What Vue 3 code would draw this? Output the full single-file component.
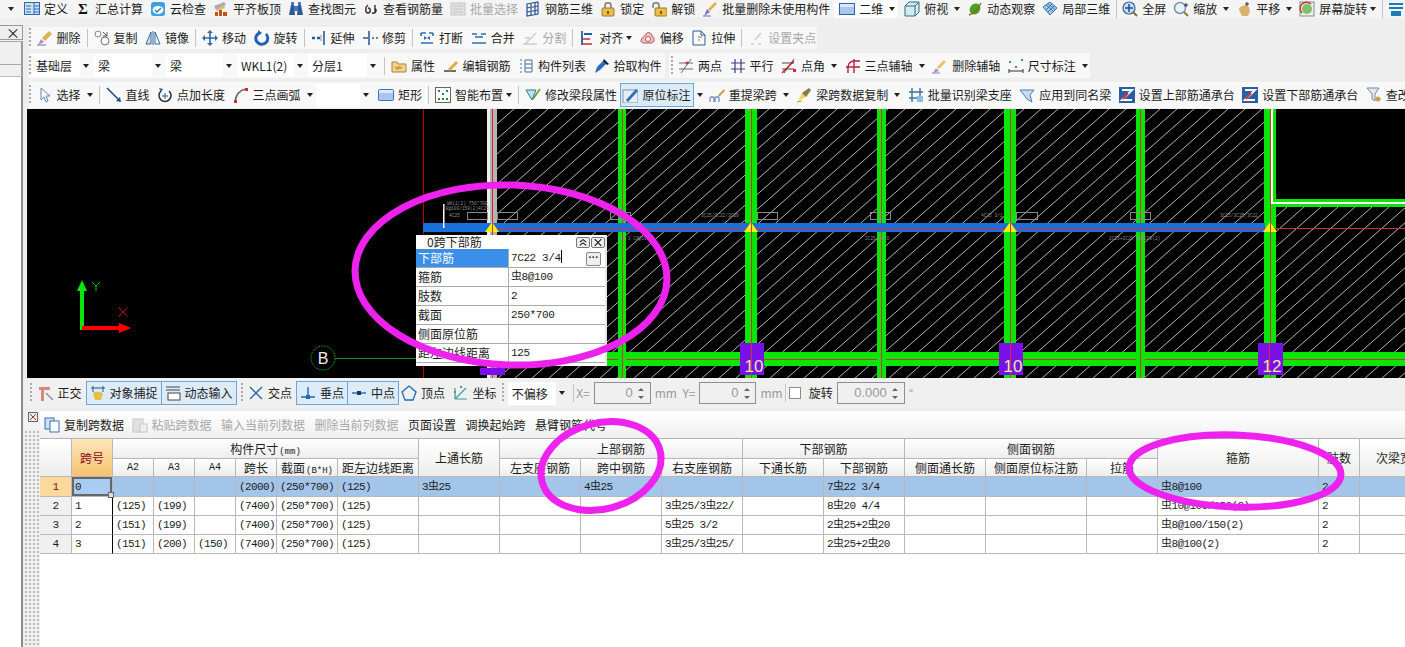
<script setup>
const S = (d, c = '#333', w = 1) => `<path d="${d}" fill="none" stroke="${c}" stroke-width="${w}"/>`
const F = (d, c) => `<path d="${d}" fill="${c}"/>`
const icons = {
  def: `<rect x=".5" y="1.5" width="15" height="12" fill="#cfe0f5" stroke="#2a6ab0"/>` + S('M2 5h5M2 8h5M2 11h5M10 2v11M10 5h5M10 8h5M10 11h5', '#2a6ab0'),
  sum: `<text x="8" y="13" font-size="15" font-weight="bold" text-anchor="middle" font-family="Liberation Serif" fill="#111">Σ</text>`,
  cloud: `<rect x="1" y="1" width="14" height="14" rx="3" fill="#3d9fe0"/><ellipse cx="8" cy="9" rx="5.5" ry="4" fill="#fff"/>` + S('M5 9l2 2 4-4', '#2a80c0', 1.5),
  level: F('M2 11h3v4H2zM6 9h3v6H6zM10 11h4v4h-4z', '#c8501e') + F('M1 5l10-4 2 3-10 5z', '#aab') + F('M3 9l8-4 1 2-8 3z', '#e8b830'),
  binoc: F('M1 14l2-10h3l1 10zM9 14l1-10h3l2 10z', '#2c5a96') + F('M6 5h4v5H6zM3 1h3v3H3zM10 1h3v3h-3z', '#4a7ab5'),
  specs: S('M5 4c-3 2-3 8 0 8 3 0 3-5 0-5M9 12c4 1 5-3 3-5M12 4v8', '#333', 1.4),
  batch: `<rect x="1" y="2" width="14" height="12" fill="#ddd" stroke="#bbb"/>` + S('M3 5h10M3 8h10M3 11h10', '#bbb'),
  cage: S('M2 3l11-2v12L2 15zM6 2v12M10 2v12M2 7l11-2M2 11l11-2', '#24518c', 1.2),
  lock: S('M5 7V4c0-3 6-3 6 0v3', '#777', 1.5) + `<rect x="2" y="7" width="12" height="8" rx="1" fill="#e8be48" stroke="#a07a18"/>` + F('M7 10h2v3H7z', '#7a5a10'),
  unlock: S('M2 7V4c0-3 6-3 6 0v3', '#777', 1.5) + `<rect x="4" y="7" width="12" height="8" rx="1" fill="#e8be48" stroke="#a07a18"/>` + F('M9 10h2v3H9z', '#7a5a10'),
  brush: F('M2 15l3-7 3 3z', '#8a6fc0') + F('M6 8l7-7 2 2-7 7z', '#e0b050') + S('M1 15h8', '#5a8ad0', 1.2),
  plane: `<rect x=".5" y="2.5" width="15" height="11" fill="#a9c6ee" stroke="#2f62a8"/>` + F('M1 3h14v3H1z', '#dbe8fa'),
  cube: `<path d="M1 5l4-4h10v10l-4 4H1z" fill="#d5ebf2" stroke="#2d6a88"/>` + S('M1 5h10v10M11 5l4-4', '#2d6a88'),
  orbit: `<ellipse cx="8" cy="8" rx="5" ry="6" transform="rotate(40 8 8)" fill="#4aa02c"/>` + S('M2 14C6 13 11 8 14 2', '#8a6a20', 1.4),
  part3d: `<path d="M1 6l7-5 7 6-7 7z" fill="#a8c8ec" stroke="#3a70aa"/>` + S('M4 4l7 6M6 2.500l7 6M4 9l6-6M6 11l6-6', '#3a70aa'),
  full: `<circle cx="7" cy="7" r="6" fill="#c9dcf2" stroke="#3a5f95" stroke-width="1.2"/>` + S('M7 3v8M3 7h8', '#1d4ea0', 1.5) + S('M11 11l4 4', '#8a6a3a', 2),
  zoom: `<circle cx="7" cy="7" r="5.500" fill="#e8f0f8" stroke="#7d93ad" stroke-width="1.5"/>` + S('M11 11l4 4', '#9a7a3a', 2) + S('M13 2v4M11 4h4', '#333'),
  pan: F('M3 9c0-3 2-3 3-4l4-1 3 2 1 4-2 5H6z', '#d9b36c') + S('M11 1v4M9 3h4', '#333'),
  rot: `<rect x="1" y="1" width="14" height="14" fill="#f5f0c8" stroke="#6a90c0"/>` + `<circle cx="8" cy="8" r="5" fill="#7cc07a"/>` + S('M3 12A6 6 0 0 1 12 3', '#d83030', 1.5),
  note: S('M1 3h14M1 7h14', '#1b7ab8', 2) + F('M3 10h10v5H3z', '#1b7ab8'),
  del: F('M1 15l3-6 3 3z', '#a590d8') + F('M5 8l7-7 3 3-7 7z', '#e0b050') + S('M0 15h9', '#777'),
  copy: `<circle cx="4" cy="4" r="3" fill="none" stroke="#888"/><circle cx="11" cy="11" r="4" fill="none" stroke="#777"/>` + S('M9 2l4 4M13 2v4h-4', '#555'),
  mirror: F('M1 14l5-12v12z', '#cfe0f0') + S('M1 14l5-12v12zM15 14l-5-12v12zM8 1v14', '#34679c'),
  move: S('M8 1v14M1 8h14', '#35699e', 1.6) + F('M8 0l3 3H5zM8 16l3-3H5zM0 8l3-3v6zM16 8l-3-3v6z', '#35699e'),
  rotate: S('M12 4a6 6 0 1 1-7-1', '#2461b8', 3) + F('M4 0v6l4-3z', '#2461b8'),
  extend: S('M13 1v14', '#2a5c9a', 1.6) + S('M1 8h3M6 8h3', '#2a5c9a', 2.500) + S('M10 5v6', '#888'),
  trim: S('M7 1v14', '#2a5c9a', 1.6) + S('M1 8h5M10 8h2M14 8h2', '#2a5c9a', 1.6),
  brk: S('M2 3h5M10 3h4M2 13h12M2 3v3M14 3v3', '#2a70b8', 1.6) + F('M5 6l3 2-3 2zM11 6l-3 2 3 2z', '#2a70b8'),
  merge: S('M1 4h5M10 4h5M1 13h14M4 7h8', '#2a70b8', 1.6),
  split: S('M1 14h14M3 14L14 3M3 8h7', '#c4c4c4', 1.4),
  align: S('M3 1v14', '#1d5fae', 1.8) + S('M3 14h10M3 9h8', '#c03030', 1.6) + F('M5 3h8v2H5z', '#1d5fae'),
  offset: `<path d="M1 11c0-4 4-4 5-7 2-3 6-1 6 2 3 1 3 7-1 7H4c-2 0-3-1-3-2z" fill="#efc0c0" stroke="#b05858"/>` + `<circle cx="8" cy="9" r="2.500" fill="#fff" stroke="#b05858"/>`,
  stretch: S('M2 1h8l4 4v10H2zM10 1v4h4', '#2a5c92') + S('M7 7h4M7 10h2', '#777'),
  grip: S('M3 14h3M10 14h3M13 3L7 10', '#c4c4c4', 1.5),
  prop: `<path d="M1 4h5l1 2h8v8H1z" fill="#f3d68a" stroke="#a88438"/>` + F('M3 9l6-1 3 2-6 2z', '#c4a050'),
  edit: S('M1 13h12', '#333', 1.4) + F('M5 11l8-8 2 2-8 8z', '#e0a840'),
  list: S('M2 2h2M2 6h2M2 10h2M2 14h2M7 2h7v12H7zM7 6h7M7 10h7', '#4a6f95'),
  pick: F('M1 15l2-6 7-7 3 3-7 7z', '#2a6cc0') + F('M10 1l5 5-2 1-4-4z', '#123'),
  two: S('M3 15L13 1M1 5h14M1 11h14', '#666') + `<circle cx="9" cy="5" r="1.500" fill="#d03030"/>`,
  par: S('M1 5h14M1 11h14M5 1v14M11 1v14', '#40407a', 1.2),
  ang: S('M1 5h12M1 11h12M3 15L13 1', '#444') + S('M1 15L13 3', '#d02030', 1.5) + F('M12 11h3v3h-3z', '#d02060'),
  arc3: S('M3 15V9a6 6 0 0 1 6-6h6M1 9h14M9 1v14', '#b02040', 1.4),
  delaux: F('M1 15l3-5 3 3z', '#a590d8') + F('M5 9l7-7 2 2-7 7z', '#e8c060') + S('M0 15h8', '#888'),
  dim: S('M1 11v4M15 11v4M1 13h14', '#333') + F('M1 3h2v2H1zM7 8h2v2H7zM13 1h2v2h-2z', '#3a9a50'),
  sel: S('M4 1v12l3-3 2 5 2-1-2-5h4z', '#6a85b0'),
  line: S('M1 1l13 13', '#1d4e8c', 1.6) + F('M15 15l-5-1 4-4z', '#1d4e8c'),
  ptlen: S('M12 4a6 6 0 1 1-8 0', '#333', 1.5) + F('M2 1l4 1-2 3z', '#1d5fae') + S('M8 6v6M5 9h6', '#1d5fae'),
  arc: S('M2 15C3 7 7 3 13 2', '#666', 1.6) + F('M1 13h3v3H1zM12 1h3v3h-3z', '#c83030'),
  rect: `<rect x=".5" y="2.5" width="15" height="11" rx="1" fill="#a9c6ee" stroke="#3d72b4"/>` + F('M1 3h14v3H1z', '#dbe8fa'),
  smart: `<rect x=".5" y=".5" width="15" height="15" fill="#fff" stroke="#666"/>` + F('M3 3h2v2H3zM7 6h2v2H7zM11 3h2v2h-2zM3 11h2v2H3zM11 11h2v2h-2zM7 11h2v2H7z', '#2a8a40'),
  beamedit: `<path d="M1 3h10L7 13z" fill="#bfe0f0" stroke="#2a7a9a"/>` + S('M8 12L15 2', '#6a9a30', 1.6),
  insitu: `<rect x="1" y="3" width="15" height="13" fill="#e6eef8" stroke="#7a93b8"/>` + F('M4 13l10-11 2 2-10 11z', '#3a6ab0'),
  lift: S('M1 15v-3c0-3 4-3 4 0v3M6 15v-3c0-3 4-3 4 0v3', '#7a9ac0', 1.4) + F('M9 8l6-6 1 2-6 6z', '#c8a050'),
  dup: F('M2 14l4-8 4 4z', '#f0d860') + F('M6 6l7-5 2 2-5 7z', '#8a7a40') + S('M1 15l5-1', '#b89830'),
  batchid: S('M1 5h14M1 11h14M4 1v14M12 1v14', '#3a70a0', 1.4) + F('M9 9h6v6H9z', '#8ac0e0'),
  apply: `<path d="M1 3h14l-4 5 2 7-5-3-3-4z" fill="#c6daf2" stroke="#4a7fb8"/>`,
  z: `<rect x="0" y="0" width="16" height="16" fill="#2a5fa8"/>` + S('M3 3h10L3 13h10', '#fff', 2) + S('M4 12l5-6', '#d83030', 2),
  check: `<path d="M1 1h12l-4 6v7l-3-2V7z" fill="#e4e8ee" stroke="#7a8898"/>` + `<circle cx="12" cy="12" r="2.500" fill="#c8a050"/>`,
  ortho: F('M1 2h11v3H6v11H3V5H1z', '#d88878') + S('M8 8l7 7', '#8899aa', 1.5),
  snap: S('M3 1v6M13 1v6M1 3h14', '#33557a') + F('M3 9c0-3 9-3 10 0l-2 6H5z', '#e6bd4a'),
  input: S('M1 2h14M1 5h14', '#444') + `<rect x="3" y="8" width="12" height="7" fill="#fff" stroke="#444"/>`,
  cross: S('M2 2l12 12M14 2L2 14', '#2268b4', 1.4),
  perp: S('M1 12h14M8 2v10', '#2268b4', 1.4) + F('M6 10h4v4H6z', '#2268b4'),
  mid: S('M1 8h14', '#2268b4', 1.4) + F('M6 6h4v4H6z', '#123a6a'),
  vtx: `<path d="M8 1l7 6-3 8H4L1 7z" fill="none" stroke="#2268b4" stroke-width="1.3"/>`,
  coord: S('M2 14h12M2 14V3M2 14L13 3', '#3a9a9a', 1.2) + F('M7 1h2v2H7zM1 6h2v2H1z', '#3a9a9a'),
  cp: `<rect x="1" y="1" width="9" height="11" fill="#cfe0f4" stroke="#3a70b0"/><rect x="6" y="4" width="9" height="11" fill="#fff" stroke="#3a70b0"/>`,
  paste: `<rect x="1" y="2" width="10" height="13" fill="#ddd" stroke="#bbb"/><rect x="8" y="7" width="7" height="8" fill="#eee" stroke="#bbb"/>`,
}
const t = (i, text, o = {}) => ({ i, t: text, ...o })
const sep = { sep: true }, grip = { grip: true }, brk = { brk: true }
const sel = (text, w) => ({ sel: text, w })
const bars = {
  top: [t('def', '定义'), t('sum', '汇总计算'), t('cloud', '云检查'), t('level', '平齐板顶'), t('binoc', '查找图元'), t('specs', '查看钢筋量'), t('batch', '批量选择', { off: 1 }), t('cage', '钢筋三维'), t('lock', '锁定'), t('unlock', '解锁'), t('brush', '批量删除未使用构件'), t('plane', '二维', { dd: 1, wh: 1 }), t('cube', '俯视', { dd: 1 }), t('orbit', '动态观察'), t('part3d', '局部三维'), sep, t('full', '全屏'), t('zoom', '缩放', { dd: 1 }), t('pan', '平移', { dd: 1 }), t('rot', '屏幕旋转', { dd: 1, tight: 1 }), sep, t('note', '')],
  r2: [grip, t('del', '删除'), sep, t('copy', '复制'), t('mirror', '镜像'), sep, t('move', '移动'), t('rotate', '旋转'), sep, t('extend', '延伸'), t('trim', '修剪'), sep, t('brk', '打断'), t('merge', '合并'), t('split', '分割', { off: 1 }), sep, t('align', '对齐', { dd: 1, tight: 1 }), t('offset', '偏移'), t('stretch', '拉伸'), sep, t('grip', '设置夹点', { off: 1 })],
  r3: [grip, sel('基础层', 59), sel('梁', 69), sel('梁', 68), sel('WKL1(2)', 68), sel('分层1', 70), sep, t('prop', '属性'), t('edit', '编辑钢筋'), t('list', '构件列表'), t('pick', '拾取构件'), brk, grip, t('two', '两点'), t('par', '平行'), t('ang', '点角', { dd: 1 }), t('arc3', '三点辅轴', { dd: 1 }), t('delaux', '删除辅轴'), t('dim', '尺寸标注', { dd: 1 })],
  r4: [grip, t('sel', '选择', { dd: 1 }), sep, t('line', '直线'), t('ptlen', '点加长度'), t('arc', '三点画弧', { dd: 1 }), sel('', 55), t('rect', '矩形'), sep, t('smart', '智能布置', { dd: 1, tight: 1 }), sep, t('beamedit', '修改梁段属性'), t('insitu', '原位标注', { on: 1 }), { arrow: 1 }, t('lift', '重提梁跨', { dd: 1 }), t('dup', '梁跨数据复制', { dd: 1 }), t('batchid', '批量识别梁支座'), t('apply', '应用到同名梁'), t('z', '设置上部筋通承台'), t('z', '设置下部筋通承台'), t('check', '查改标注')],
  r5: [grip, t('ortho', '正交'), t('snap', '对象捕捉', { on: 1 }), t('input', '动态输入', { on: 1, join: 1 }), { grip: true, wide: 1 }, t('cross', '交点'), t('perp', '垂点', { on: 1 }), t('mid', '中点', { on: 1, join: 1 }), t('vtx', '顶点'), t('coord', '坐标'), grip, sel('不偏移', 59), sep,
    { lb: 'X=' }, { spin: '0', w: 57 }, { lb: 'mm' }, { lb: 'Y=', far: 1 }, { spin: '0', w: 57 }, { lb: 'mm' }, sep, { box: 1 }, { txt: '旋转' }, { spin: '0.000', w: 68 }, { lb: '°' }],
  sub: [t('cp', '复制跨数据'), t('paste', '粘贴跨数据', { off: 1 }), { off2: '输入当前列数据' }, { off2: '删除当前列数据' }, { txt: '页面设置' }, { txt: '调换起始跨' }, { txt: '悬臂钢筋代号' }],
}
const columns = [32, 41, 41, 41, 41, 41, 61, 81, 81, 81, 81, 81, 81, 81, 81, 101, 71, 161, 41, 81]
const sub = [
  ['A2', 'lat'], ['A3', 'lat'], ['A4', 'lat'], ['跨长'], ['截面', '', '(B*H)'], ['距左边线距离'],
]
const sub2 = [['左支座钢筋', 81], ['跨中钢筋', 81], ['右支座钢筋', 81], ['下通长筋', 81], ['下部钢筋', 81], ['侧面通长筋', 81], ['侧面原位标注筋', 101], ['拉筋', 71]]
const rows = [
  ['0', '', '', '', '(2000)', '(250*700)', '(125)', '3虫25', '', '4虫25', '', '', '7虫22 3/4', '', '', '', '虫8@100', '2', ''],
  ['1', '(125)', '(199)', '', '(7400)', '(250*700)', '(125)', '', '', '', '3虫25/3虫22/', '', '8虫20 4/4', '', '', '', '虫10@100/150(2)', '2', ''],
  ['2', '(151)', '(199)', '', '(7400)', '(250*700)', '(125)', '', '', '', '5虫25 3/2', '', '2虫25+2虫20', '', '', '', '虫8@100/150(2)', '2', ''],
  ['3', '(151)', '(200)', '(150)', '(7400)', '(250*700)', '(125)', '', '', '', '3虫25/3虫25/', '', '2虫25+2虫20', '', '', '', '虫8@100(2)', '2', ''],
]
const props = [
  ['下部筋', '7C22 3/4'], ['箍筋', '虫8@100'], ['肢数', '2'], ['截面', '250*700'], ['侧面原位筋', ''], ['距左边线距离', '125'],
]
const cols = [[618, 626], [745, 757], [877, 886], [1004, 1016], [1136, 1145], [1264, 1276]]
const mid = (c) => Math.floor((c[0] + c[1]) / 2) + 0.5
const tags = [[740, 24, '10', 754], [999, 24, '10', 1013], [1258, 25, '12', 1272]]
const tris = [492, 751, 1010, 1270]
const bars2 = [[467, 212, 20], [497, 212, 20], [610, 212, 20], [757, 212, 20], [870, 212, 20], [1016, 212, 21], [1130, 212, 20]]
const cad = [
  [447, 205, 'WKL1(2) 750*700'], [443, 210, 'C8@100/150(2)4C25'], [449, 217, '4C25'],
  [701, 217, '3C25/3C22/3C20'], [981, 217, '4C25 3/1'], [1220, 217, '3C25/3C25/3C22'],
  [617, 240, '[C1 3 C8@100]'], [865, 240, '2C25+2C20'], [1109, 240, '2C25+2C20 C8@100(2)'],
]
</script>

<template>
  <div class="page">
    <div class="bar top">
      <i class="arrow lead"></i>
      <template v-for="(it, n) in bars.top" :key="n">
        <span v-if="it.sep" class="sep"></span>
        <div v-else class="tool" :class="{ off: it.off, wh: it.wh, tight: it.tight }">
          <svg class="ic" viewBox="0 0 16 16" v-html="icons[it.i]"></svg>
          <span v-if="it.t">{{ it.t }}</span>
          <i v-if="it.dd" class="arrow"></i>
        </div>
      </template>
    </div>
    <div class="body">
      <aside class="side">
        <div class="closebox">×</div>
        <div class="sidetab"></div>
        <div class="sidetab two"></div>
        <div class="sidewhite"></div>
      </aside>
      <main class="main">
        <div v-for="key in ['r2', 'r3', 'r4']" :key="key" class="bar" :class="key">
          <template v-for="(it, n) in bars[key]" :key="n">
            <span v-if="it.sep" class="sep"></span>
            <span v-else-if="it.grip" class="grip"></span>
            <span v-else-if="it.brk" class="brk"></span>
            <i v-else-if="it.arrow" class="arrow solo"></i>
            <div v-else-if="it.sel !== undefined" class="sel" :style="{ width: it.w + 'px' }">
              <span class="seltext">{{ it.sel }}</span><i class="arrow"></i>
            </div>
            <div v-else class="tool" :class="{ off: it.off, on: it.on, tight: it.tight }">
              <svg class="ic" viewBox="0 0 16 16" v-html="icons[it.i]"></svg>
              <span>{{ it.t }}</span>
              <i v-if="it.dd" class="arrow"></i>
            </div>
          </template>
        </div>

        <svg class="cad" width="1378" height="269" viewBox="27 109 1378 269">
          <defs>
            <pattern id="hatch" patternUnits="userSpaceOnUse" x="497" y="109" width="17" height="15">
              <line x1="0" y1="15" x2="17" y2="0" stroke="#e4e4e4" stroke-width=".8" />
            </pattern>
          </defs>
          <rect x="27" y="109" width="1378" height="269" fill="#000" />
          <rect x="497" y="109" width="908" height="269" fill="url(#hatch)" />
          <rect x="1276" y="109" width="129" height="91" fill="#000" />
          <line x1="423.500" y1="109" x2="423.500" y2="378" stroke="#b00" />
          <rect x="487" y="109" width="3" height="269" fill="#eee" />
          <rect x="490" y="109" width="7" height="269" fill="#b4b4b4" />
          <line x1="492.500" y1="109" x2="492.500" y2="378" stroke="#d22" />
          <rect x="497" y="352" width="908" height="14" fill="#0ae60a" />
          <line x1="497" y1="359.500" x2="1405" y2="359.500" stroke="#c33" />
          <g v-for="c in cols" :key="c[0]">
            <rect :x="c[0]" y="109" :width="c[1] - c[0]" height="269" fill="#0ae60a" />
            <line :x1="mid(c)" y1="109" :x2="mid(c)" y2="378" stroke="#c33" />
          </g>
          <rect x="1271" y="199" width="134" height="8" fill="#0ae60a" />
          <rect x="1271" y="202" width="134" height="2" fill="#fff" />
          <rect x="1271" y="109" width="2" height="95" fill="#fff" />
          <rect x="423" y="223" width="842" height="9" fill="#1a6fdc" />
          <line x1="492" y1="228.500" x2="1405" y2="228.500" stroke="#c33" />
          <rect x="443" y="204" width="1.500" height="24" fill="#fff" />
          <polygon v-for="x in tris" :key="x" :points="`${x - 7},232 ${x},222 ${x + 7},232`" fill="#ffee00" />
          <line v-for="x in tris" :key="'t' + x" :x1="x + .5" y1="222" :x2="x + .5" y2="232" stroke="#c33" />
          <rect v-for="b in bars2" :key="b[0]" :x="b[0] + .5" :y="b[1] + .5" :width="b[2]" height="7" fill="none" stroke="#8a8a8a" />
          <text v-for="c in cad" :key="c[2]" :x="c[0]" :y="c[1]" class="cadtext">{{ c[2] }}</text>
          <line x1="335" y1="358.500" x2="416" y2="358.500" stroke="#0a9a0a" />
          <circle cx="323" cy="358" r="12" fill="#000" stroke="#0a9a0a" stroke-dasharray="2 1" />
          <text x="323" y="364" class="axisb">B</text>
          <rect x="480" y="368" width="25" height="7" fill="#7a10e8" />
          <g v-for="g in tags" :key="g[0]">
            <rect :x="g[0]" y="343" :width="g[1]" height="32" fill="#7a10e8" />
            <line :x1="g[3] - 2.5" y1="343" :x2="g[3] - 2.5" y2="375" stroke="#c33" />
            <text :x="g[3]" y="372" class="tag">{{ g[2] }}</text>
          </g>
          <rect x="80" y="290" width="4" height="40" fill="#0ae60a" />
          <polygon points="77,291 82,280 87,291" fill="#0ae60a" />
          <rect x="82" y="326" width="38" height="4" fill="#f00" />
          <polygon points="119,323 131,328 119,333" fill="#f00" />
          <path d="M92 282l4 4 4-4M96 286v5" stroke="#0c0" fill="none" />
          <path d="M119 308l8 8M127 308l-8 8" stroke="#c00" fill="none" />
        </svg>

        <div class="bar r5">
          <template v-for="(it, n) in bars.r5" :key="n">
            <span v-if="it.sep" class="sep"></span>
            <span v-else-if="it.grip" class="grip" :class="{ wide: it.wide }"></span>
            <div v-else-if="it.sel !== undefined" class="sel" :style="{ width: it.w + 'px' }">
              <span class="seltext">{{ it.sel }}</span><i class="arrow"></i>
            </div>
            <span v-else-if="it.lb" class="lb" :class="{ far: it.far }">{{ it.lb }}</span>
            <span v-else-if="it.txt" class="txt close">{{ it.txt }}</span>
            <span v-else-if="it.box" class="box"></span>
            <div v-else-if="it.spin" class="spin" :style="{ width: it.w + 'px' }">
              <span class="val">{{ it.spin }}</span>
              <span class="updn"><i class="up"></i><i class="dn"></i></span>
            </div>
            <div v-else class="tool" :class="{ on: it.on, join: it.join }">
              <svg class="ic" viewBox="0 0 16 16" v-html="icons[it.i]"></svg>
              <span>{{ it.t }}</span>
            </div>
          </template>
        </div>

        <section class="lower">
          <div class="strip">
            <svg class="closeic" viewBox="0 0 10 10">
              <rect x=".5" y=".5" width="9" height="9" fill="#eee" stroke="#666" />
              <path d="M2 2l6 6M8 2L2 8" stroke="#a33" />
            </svg>
            <div class="dots"></div>
          </div>
          <div class="right">
            <div class="subitems">
              <template v-for="(it, n) in bars.sub" :key="n">
                <div v-if="it.i" class="tool" :class="{ off: it.off }">
                  <svg class="ic" viewBox="0 0 16 16" v-html="icons[it.i]"></svg>
                  <span>{{ it.t }}</span>
                </div>
                <span v-else-if="it.off2" class="txt dim">{{ it.off2 }}</span>
                <span v-else class="txt">{{ it.txt }}</span>
              </template>
            </div>
            <div class="tableclip">
              <table class="grid">
                <colgroup>
                  <col v-for="(w, n) in columns" :key="n" :style="{ width: w + 'px' }" />
                </colgroup>
                <thead>
                  <tr class="h1">
                    <th rowspan="2"></th>
                    <th rowspan="2" class="kh">跨号</th>
                    <th colspan="6">构件尺寸<small>(mm)</small></th>
                    <th rowspan="2">上通长筋</th>
                    <th colspan="3">上部钢筋</th>
                    <th colspan="2">下部钢筋</th>
                    <th colspan="3">侧面钢筋</th>
                    <th rowspan="2">箍筋</th>
                    <th rowspan="2">肢数</th>
                    <th rowspan="2">次梁宽度</th>
                  </tr>
                  <tr class="h2">
                    <th v-for="s in sub" :key="s[0]" :class="s[1]">{{ s[0] }}<small v-if="s[2]">{{ s[2] }}</small></th>
                    <th v-for="s in sub2" :key="s[0]">{{ s[0] }}</th>
                  </tr>
                </thead>
                <tbody>
                  <tr v-for="(r, i) in rows" :key="i" :class="{ active: i === 0 }">
                    <td class="idx">{{ i + 1 }}</td>
                    <td v-for="(c, j) in r" :key="j" :class="{ cur: i === 0 && j === 0, blk: i > 0 && j === 0 }">{{ c }}</td>
                  </tr>
                </tbody>
              </table>
            </div>
          </div>
        </section>
      </main>
    </div>

    <div class="popup">
      <div class="ptitle">
        <span>0跨下部筋</span>
        <span class="pbtns">
          <svg class="pbtn" viewBox="0 0 14 11"><path d="M3 5l4-3 4 3M3 9l4-3 4 3" fill="none" stroke="#111" stroke-width="1.300" /></svg>
          <svg class="pbtn" viewBox="0 0 14 11"><path d="M3 1.500l8 8M11 1.500l-8 8" fill="none" stroke="#111" stroke-width="1.300" /></svg>
        </span>
      </div>
      <div v-for="(p, i) in props" :key="p[0]" class="prow" :class="{ first: i === 0 }">
        <span class="plabel">{{ p[0] }}</span>
        <span class="pval">{{ p[1] }}<i v-if="i === 0" class="caret"></i></span>
        <b v-if="i === 0" class="more">···</b>
      </div>
    </div>

    <svg class="marks" width="1405" height="647" viewBox="0 0 1405 647">
      <ellipse cx="511" cy="275" rx="156" ry="90" transform="rotate(2 511 275)" />
      <ellipse cx="601" cy="466" rx="61" ry="43" transform="rotate(-15 601 466)" />
      <ellipse cx="1235" cy="471" rx="106" ry="36" transform="rotate(2 1235 471)" />
    </svg>
  </div>
</template>

<style scoped>
.page {
  position: relative;
  width: 1405px;
  height: 647px;
  overflow: hidden;
  background: #eee;
  color: #1c1c1c;
  font: 12px/16px "Noto Sans CJK SC", "Liberation Sans", sans-serif;
}
.bar {
  display: flex;
  align-items: center;
  gap: 7.5px;
  white-space: nowrap;
  overflow: hidden;
}
.top {
  height: 18px;
  padding-left: 6px;
  gap: 7px;
  background: #f4f4f4;
}
.top .tool { height: 18px; margin-top: -1px; }
.lead { margin: 0 3px 0 0; }
.body { display: flex; height: 629px; }
.side {
  width: 23px;
  flex: none;
  display: flex;
  flex-direction: column;
  background: #f0f0f0;
}
.closebox {
  height: 15px;
  margin-top: 7px;
  border: 1px solid #999;
  border-left: 0;
  background: #eee;
  text-align: right;
  padding-right: 2px;
  font-size: 14px;
  line-height: 13px;
  box-sizing: border-box;
}
.sidetab {
  height: 23px;
  margin-top: 1px;
  border-right: 2px solid #999;
  border-top: 1px solid #aaa;
  box-sizing: border-box;
}
.sidetab.two { height: 12px; margin-top: 0; }
.sidewhite {
  flex: 1;
  background: #fff;
  border-right: 2px solid #8c8c8c;
  border-top: 1px solid #bbb;
  box-sizing: border-box;
}
.main { width: 1382px; flex: none; }
.r2, .r3, .r4 {
  margin-left: 6px;
  padding-left: 2px;
  background: #f8f8f8;
}
.r2 { width: 788px; box-sizing: border-box; height: 22px; margin-top: 9px; }
.r3 { width: 1061px; box-sizing: border-box; height: 25px; margin-top: 4px; }
.r4 { height: 26px; margin-top: 4px; }
.r5 {
  height: 30px;
  padding-left: 9px;
  background: #f0f0f0;
}
.grip {
  flex: none;
  align-self: center;
  width: 2px;
  height: 20px;
  margin: 0 -2px;
  background: repeating-linear-gradient(#aaa 0 2px, transparent 2px 4px);
}
.grip.wide { margin: 0 -2px 0 2px; }
.sep {
  flex: none;
  width: 1px;
  height: 18px;
  margin: 0 -1.500px;
  background: #c4c4c4;
}
.brk {
  flex: none;
  align-self: stretch;
  width: 4px;
  margin: 0 -4px;
  background: #eee;
}
.tool {
  display: flex;
  align-items: center;
  gap: 4px;
  flex: none;
}
.tight .arrow { margin-left: -1px; }
.ic { width: 16px; height: 16px; flex: none; }
.off { color: #a8a8a8; }
.off .ic { opacity: .8; }
.wh {
  background: #fff;
  padding: 0 2px 0 5px;
  margin-left: -3px;
}
.on {
  height: 24px;
  padding: 0 3px;
  margin: 0 -3.500px;
  background: #dcebf8;
  border: 1px solid #6aa6dc;
  box-sizing: border-box;
}
.r4 .on { padding: 0 2px 0 1px; gap: 5px; margin-left: -5px; }
.on.join { margin: 0 -5.500px 0 -5px; }
.arrow {
  flex: none;
  width: 0;
  height: 0;
  margin-left: 2px;
  border: 3.500px solid transparent;
  border-top: 4px solid #222;
  border-bottom: 0;
}
.arrow.solo { margin: 0 -2px 0 -.5px; }
.sel {
  flex: none;
  display: flex;
  align-items: center;
  box-sizing: border-box;
  height: 23px;
  margin-left: -4.500px;
  padding-right: 2px;
}
.seltext {
  flex: 1;
  height: 100%;
  line-height: 23px;
  background: #fff;
  padding-left: 4px;
  overflow: hidden;
}
.sel .arrow { margin: 0 0 0 3px; }
.r5 .sel { margin-left: -2px; }
.lb { flex: none; color: #999; margin: 0 -3.500px; }
.lb.far { margin-left: 1.500px; }
.txt { flex: none; }
.close { margin-right: -3.500px; }
.dim { color: #a8a8a8; }
.box {
  flex: none;
  width: 12px;
  height: 12px;
  box-sizing: border-box;
  border: 1px solid #8a8a8a;
  background: #fff;
  margin-left: -3px;
}
.spin {
  flex: none;
  display: flex;
  align-items: center;
  justify-content: flex-end;
  box-sizing: border-box;
  height: 22px;
  border: 1px solid #8f8f8f;
  background: #f0f0f0;
  color: #999;
  font-size: 13px;
}
.val { font-family: "Liberation Sans", sans-serif; }
.updn {
  width: 17px;
  display: flex;
  flex-direction: column;
  align-items: center;
  gap: 5px;
}
.up, .dn { width: 0; height: 0; border: 3px solid transparent; }
.up { border-bottom: 3px solid #666; border-top: 0; }
.dn { border-top: 3px solid #666; border-bottom: 0; }
.lower {
  display: flex;
  margin-top: 3px;
  margin-left: 1px;
  height: 236px;
  background: #fff;
}
.strip {
  flex: none;
  width: 16px;
  display: flex;
  flex-direction: column;
  background: #f2f2f2;
}
.closeic { flex: none; width: 10px; height: 10px; margin: 1px 0 8px 4px; }
.dots {
  flex: 1;
  background-color: #efefef;
  background-image: radial-gradient(#bdbdbd 1px, transparent 1.200px);
  background-size: 4px 4px;
}
.right { flex: 1; min-width: 0; }
.subitems {
  display: flex;
  align-items: center;
  gap: 7.500px;
  height: 28px;
  padding-left: 4px;
  box-sizing: border-box;
  white-space: nowrap;
  background: linear-gradient(#fff, #f0f0f0);
  border-bottom: 1px solid #b4b4b4;
}
.subitems .txt { margin-left: 2px; }
.tableclip { height: 208px; overflow: hidden; }
.grid {
  table-layout: fixed;
  width: 1366px;
  border-collapse: separate;
  border-spacing: 0;
}
.grid th, .grid td {
  padding: 0;
  border-right: 1px solid #b8b8b8;
  border-bottom: 1px solid #b8b8b8;
  box-sizing: border-box;
  overflow: hidden;
  white-space: nowrap;
}
.grid th {
  font-weight: 400;
  background: linear-gradient(#fff, #ededed);
  text-align: center;
}
.h1 th { height: 20px; }
.h2 th { height: 18px; }
.grid small {
  font: 9px "Liberation Mono", monospace;
  margin-left: 1px;
}
.grid .lat { font: 10px "Liberation Mono", monospace; }
.grid .kh {
  background: linear-gradient(#fde6bb, #f5c26f);
  color: #8a0a20;
}
.grid td {
  height: 19px;
  padding-left: 3px;
  font: 11px/18px "Liberation Mono", "Noto Sans CJK SC", monospace;
  letter-spacing: -.6px;
}
.grid .idx {
  padding: 0;
  text-align: center;
  background: #f0f0f0;
}
.grid .active td { height: 20px; background: #a4c5ea; }
.grid .active .idx { background: #fdd89b; color: #8a0a20; }
.grid .active .cur {
  position: relative;
  overflow: visible;
  background: #a9cdf2;
  box-shadow: inset 0 0 0 2px #666;
}
.cur::after {
  content: "";
  position: absolute;
  right: -2px;
  bottom: -2px;
  width: 4px;
  height: 4px;
  background: #ddd;
  border: 1px solid #666;
}
.grid .blk { border-right-color: #000; }
.popup {
  position: absolute;
  left: 416px;
  top: 235px;
  width: 191px;
  height: 131px;
  background: #fff;
  border-right: 2px solid #e6e6e6;
  box-sizing: border-box;
}
.ptitle {
  display: flex;
  justify-content: space-between;
  height: 14px;
  line-height: 14px;
  padding-left: 11px;
}
.pbtns { display: flex; gap: 1px; padding-top: 2px; }
.pbtn {
  display: block;
  width: 14px;
  height: 11px;
  border: 1px solid #777;
  border-radius: 2px;
  background: #eee;
  box-sizing: border-box;
}
.prow {
  position: relative;
  display: flex;
  height: 19px;
  border-bottom: 1px solid #aaa;
  box-sizing: border-box;
  line-height: 18px;
}
.plabel {
  flex: none;
  width: 93px;
  padding-left: 2px;
  box-sizing: border-box;
  border-right: 1px solid #aaa;
}
.first .plabel { background: #3a8fe8; color: #fff; }
.pval {
  padding-left: 2px;
  font: 11px/18px "Liberation Mono", "Noto Sans CJK SC", monospace;
  letter-spacing: -.4px;
}
.caret {
  display: inline-block;
  width: 1px;
  height: 13px;
  background: #000;
  vertical-align: -2px;
}
.more {
  position: absolute;
  right: 4px;
  top: 3px;
  width: 15px;
  height: 14px;
  border: 1px solid #888;
  border-radius: 2px;
  background: #eee;
  font: 700 10px/10px "Liberation Sans", sans-serif;
  text-align: center;
  box-sizing: border-box;
}
.cad { display: block; margin: 1px 0 0 4px; }
.cadtext { font: 4.500px "Liberation Mono", monospace; fill: #8c8c8c; }
.axisb { font: 16px "Liberation Sans", sans-serif; fill: #eee; text-anchor: middle; }
.tag { font: 17px "Liberation Sans", sans-serif; fill: #e8e8a8; text-anchor: middle; }
.marks { position: absolute; left: 0; top: 0; pointer-events: none; }
.marks ellipse { fill: none; stroke: #ee22ee; stroke-width: 7; }
</style>

<style>
html, body { margin: 0; overflow: hidden; }
</style>
